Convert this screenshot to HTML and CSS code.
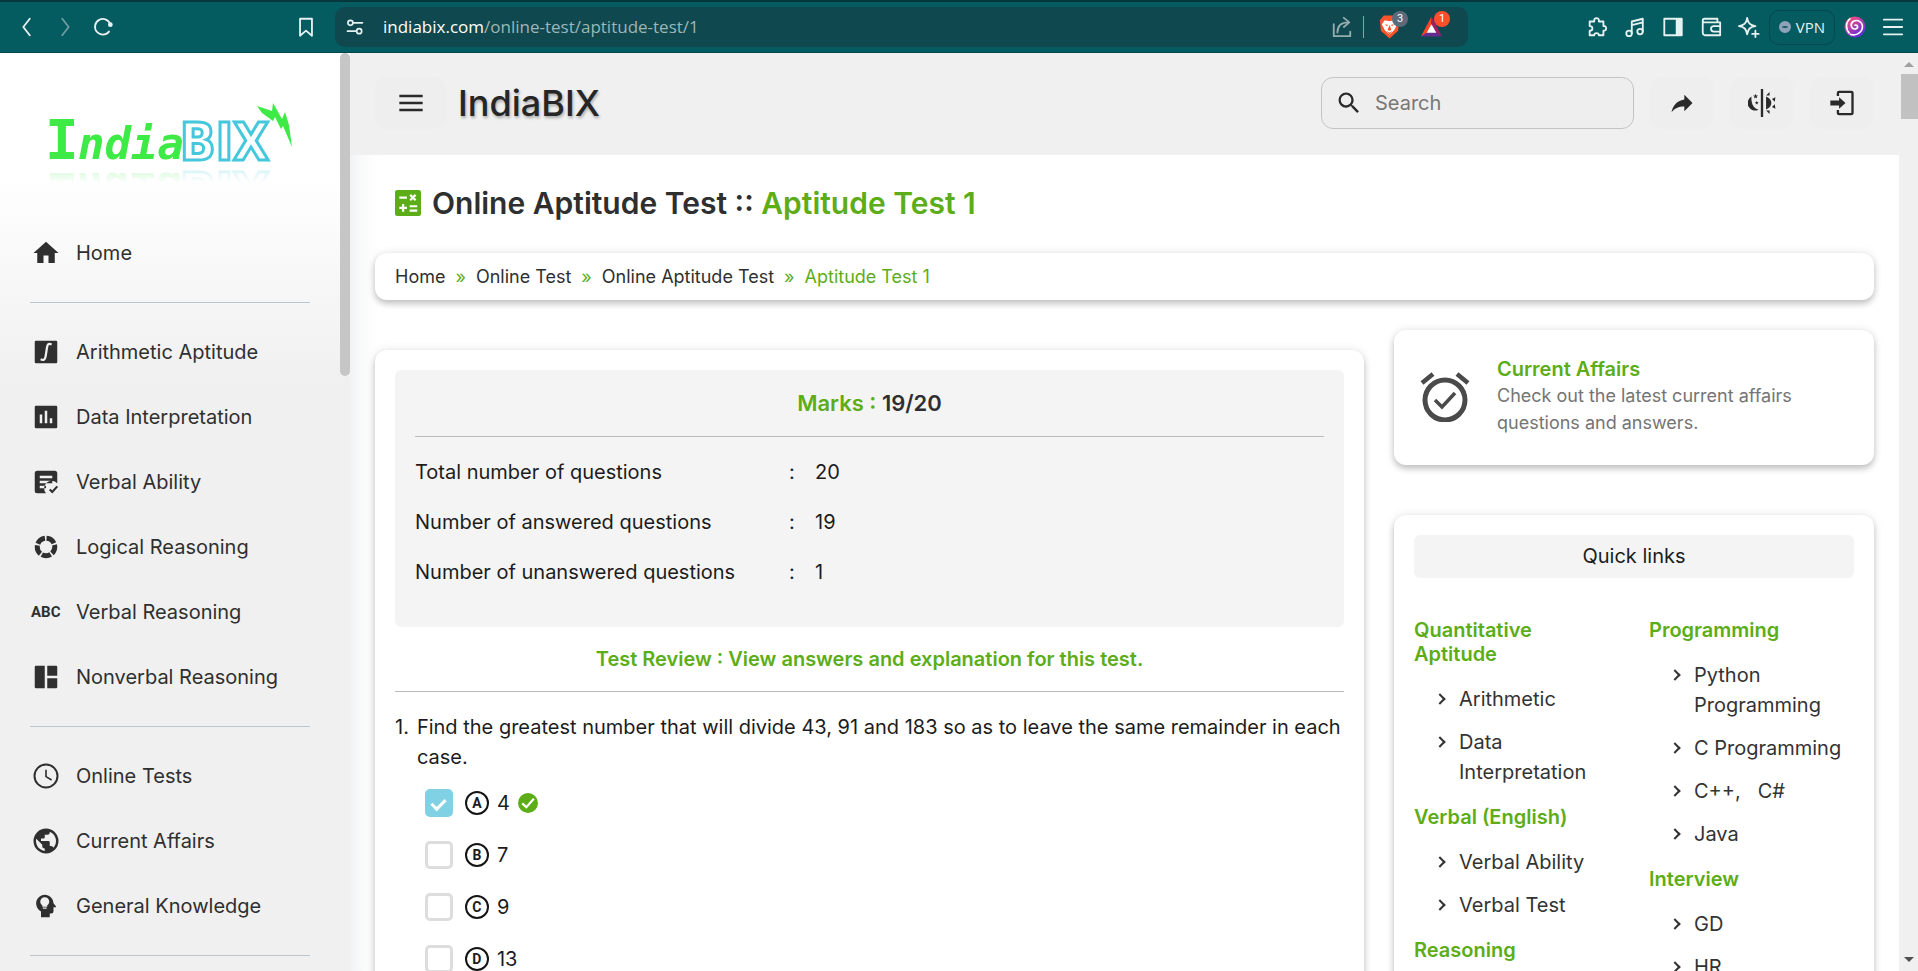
FILE: index.html
```html
<!DOCTYPE html>
<html lang="en">
<head>
<meta charset="utf-8">
<title>Online Aptitude Test - Aptitude Test 1 - IndiaBIX</title>
<link rel="stylesheet" href="styles.css">
</head>
<body>
<div class="toolbar">
  <div class="tools">
    <button class="tool" aria-label="Back"><svg viewBox="0 0 24 24" class="ic22"><path class="line" d="M15 3 8 12l7 9"/></svg></button>
    <button class="tool dim" aria-label="Forward"><svg viewBox="0 0 24 24" class="ic22"><path class="line" d="m9 3 7 9-7 9"/></svg></button>
    <button class="tool" aria-label="Reload"><svg viewBox="0 0 24 24" class="ic22"><path class="line" d="M18.500 17A8.500 8.500 0 1 1 20 9.500"/><circle cx="20" cy="9.500" r="2.600" fill="currentColor"/></svg></button>
  </div>
  <button class="tool bookmark" aria-label="Bookmark"><svg viewBox="0 0 24 24" class="ic22"><path class="line" d="M5.500 3h13v18.500L12 16l-6.500 5.500z"/></svg></button>
  <div class="address">
    <svg viewBox="0 0 24 24" class="ic20"><g class="line"><circle cx="6.500" cy="7" r="3"/><path d="M10 7h11M3 17h10"/><circle cx="17" cy="17" r="3"/></g></svg>
    <p class="url">indiabix.com<span>/online-test/aptitude-test/1</span></p>
    <svg viewBox="0 0 24 24" class="ic22 share"><path class="line" d="M3 9v13h18v-5M7 18c0-7 4-11 12-11M14 2l6 5-6 5"/></svg>
    <span class="bar"></span>
    <span class="ext">
      <svg viewBox="0 0 24 26" class="shield"><path d="M6 1h12l4 5-1 11-9 8-9-8L2 6z" fill="#fb542b"/><path d="m7 6 5 1 5-1 3 4-3 6-5 5-5-5-3-6z" fill="#fff"/><path d="m7 10 4 1-2 1zM17 10l-4 1 2 1zM12 11l2 5-2 1-2-1zM9 17l3 2 3-2-3 4z" fill="#fb542b"/></svg>
      <b class="badge grey">3</b>
    </span>
    <span class="ext">
      <svg viewBox="0 0 24 24" class="shield"><path d="M12 1 1 22l11-7z" fill="#ff4724"/><path d="m12 1 11 21-11-7z" fill="#9e1f63"/><path d="m1 22 11-7 11 7z" fill="#662d91"/><path d="m12 9 5 9H7z" fill="#fff"/></svg>
      <b class="badge red">1</b>
    </span>
  </div>
  <div class="tools">
    <button class="tool" aria-label="Extensions"><svg viewBox="0 0 24 24" class="ic22"><path class="line" d="M4 6h5c-1-5 6-5 5 0h5v5c4-1 4 6 0 5v5h-5c0-3-5-3-5 0H4v-5c4 0 4-5 0-5z"/></svg></button>
    <button class="tool" aria-label="Media"><svg viewBox="0 0 24 24" class="ic22"><g class="line"><circle cx="5.500" cy="19" r="3"/><circle cx="17.500" cy="17" r="3"/><path d="M8.500 19V6l12-3v14M8.500 10l12-3"/></g></svg></button>
    <button class="tool" aria-label="Sidebar"><svg viewBox="0 0 24 24" class="ic22"><path class="line" d="M2.500 3h19v18h-19z"/><path fill="currentColor" d="M15 3h7v18h-7z"/></svg></button>
    <button class="tool" aria-label="Wallet"><svg viewBox="0 0 24 24" class="ic22"><path class="line" d="M19 7V3H5a2 2 0 0 0 0 4h17v14H5a3 3 0 0 1-2-3V5M22 11h-7a3 3 0 0 0 0 6h7"/></svg></button>
    <button class="tool" aria-label="Assistant"><svg viewBox="0 0 24 24" class="ic22"><path class="line" d="M10 2c1 6 3 8 9 9-6 1-8 3-9 9-1-6-3-8-9-9 6-1 8-3 9-9zM19 16v7M15.500 19.500h7"/></svg></button>
    <button class="vpn"><span class="dot"></span>VPN</button>
    <button class="tool" aria-label="Profile"><svg viewBox="0 0 24 24" class="ic22"><defs><linearGradient id="sw" gradientUnits="userSpaceOnUse" x1="4" y1="2" x2="18" y2="22"><stop offset="0" stop-color="#ff4f7a"/><stop offset="1" stop-color="#5b2be0"/></linearGradient></defs><circle cx="12" cy="12" r="11.500" fill="url(#sw)"/><path d="M12 10c3-1 4 3 1 4-5 1-7-5-3-8 5-3 11 1 10 7-1 6-8 9-13 7" fill="none" stroke="#fff" stroke-width="1.800" stroke-linecap="round"/><path d="M7 2.500C1 7 2 15 6 19" fill="none" stroke="#fff" stroke-width="1.800"/></svg></button>
    <button class="tool" aria-label="Menu"><svg viewBox="0 0 24 24" class="ic22"><path class="line" d="M2 4h20M2 12h20M2 20h20"/></svg></button>
  </div>
</div>

<div class="page">
  <nav class="side">
    <a class="logo" href="#" aria-label="IndiaBIX">
      <svg viewBox="0 0 260 66" class="logo-art">
        <text class="lg-i" x="2" y="56">I</text><text class="lg-ndia" x="35" y="56">ndia</text>
        <text class="lg-bix" x="137" y="57">BIX</text>
        <path d="m214 3 15 5 1-8 9 16 3-7 4 13 3 22-9-21-2 3-6-12-2 4-11-8z" fill="#3eea45"/>
      </svg>
    </a>
    <ul class="menu">
      <li><a href="#"><svg viewBox="0 0 24 24"><path d="M10 20v-6h4v6h5v-8h3L12 3 2 12h3v8z"/></svg>Home</a></li>
    </ul>
    <ul class="menu">
      <li><a href="#"><svg viewBox="0 0 24 24"><rect x="3" y="3" width="18" height="18" rx="1"/><path d="M16.500 6c-3-1.300-3.400.500-3.800 3l-1 6.500c-.400 2.500-1.500 3.600-4 2.300" fill="none" stroke="#f0f0f0" stroke-width="1.800"/></svg>Arithmetic Aptitude</a></li>
      <li><a href="#"><svg viewBox="0 0 24 24"><rect x="3" y="3" width="18" height="18" rx="1"/><path fill="#f0f0f0" d="M7 10h2v7H7zM11 7h2v10h-2zM15 13h2v4h-2z"/></svg>Data Interpretation</a></li>
      <li><a href="#"><svg viewBox="0 0 24 24"><path fill-rule="evenodd" d="M5 3h14a2 2 0 0 1 2 2v8a6 6 0 0 0-9 8H5a2 2 0 0 1-2-2V5a2 2 0 0 1 2-2M7 7v2h10V7zM7 11v2h10v-2zM7 15v2h5v-2z"/><path d="m15 18 2 2 4-4.500" fill="none" stroke="#2f2f2f" stroke-width="1.700"/></svg>Verbal Ability</a></li>
      <li><a href="#"><svg viewBox="0 0 24 24"><circle cx="12" cy="12" r="7" fill="none" stroke="#2f2f2f" stroke-width="4" pathLength="100" stroke-dasharray="17 3" stroke-dashoffset="4"/></svg>Logical Reasoning</a></li>
      <li><a href="#"><span class="abc" aria-hidden="true">ABC</span>Verbal Reasoning</a></li>
      <li><a href="#"><svg viewBox="0 0 24 24"><path d="M4 3h7v18H4a1 1 0 0 1-1-1V4a1 1 0 0 1 1-1M13 3h7a1 1 0 0 1 1 1v7h-8zM13 13h8v7a1 1 0 0 1-1 1h-7z"/></svg>Nonverbal Reasoning</a></li>
    </ul>
    <ul class="menu">
      <li><a href="#"><svg viewBox="0 0 24 24"><circle cx="12" cy="12" r="9.200" fill="none" stroke="#2f2f2f" stroke-width="1.600"/><path d="M12 7v5.500l4.500 2.700" fill="none" stroke="#2f2f2f" stroke-width="1.300"/></svg>Online Tests</a></li>
      <li><a href="#"><svg viewBox="0 0 24 24"><path d="M17.900 17.390C17.640 16.590 16.890 16 16 16H15V13A1 1 0 0 0 14 12H8V10H10A1 1 0 0 0 11 9V7H13A2 2 0 0 0 15 5V4.590C17.930 5.770 20 8.640 20 12C20 14.080 19.200 15.970 17.900 17.390M11 19.930C7.050 19.440 4 16.080 4 12C4 11.380 4.080 10.780 4.210 10.210L9 15V16A2 2 0 0 0 11 18M12 2A10 10 0 0 0 2 12A10 10 0 0 0 12 22A10 10 0 0 0 22 12A10 10 0 0 0 12 2Z"/></svg>Current Affairs</a></li>
      <li><a href="#"><svg viewBox="0 0 24 24"><path d="M11 3c3.800 0 6.800 3 7 6.700l1.900 2.500c.300.300 0 .800-.400.800H18v3a2 2 0 0 1-2 2h-1v3H8v-4.700A7 7 0 0 1 11 3"/><path fill="#f0f0f0" d="M11 5a3.500 3.500 0 0 1 2 6.400v1.100H9v-1.100A3.500 3.500 0 0 1 11 5M9.500 13.200h3v1h-3z"/></svg>General Knowledge</a></li>
    </ul>
    <ul class="menu"></ul>
    <span class="side-thumb"></span>
  </nav>

  <div class="main">
    <header class="top">
      <button class="sq wide" aria-label="Toggle menu"><svg viewBox="0 0 24 24"><path d="M2 5h20v2H2zM2 11h20v2H2zM2 17h20v2H2z"/></svg></button>
      <span class="brand">IndiaBIX</span>
      <label class="search">
        <svg viewBox="0 0 24 24"><path d="M9.500 3A6.500 6.500 0 0 1 16 9.500C16 11.110 15.410 12.590 14.440 13.730L14.710 14H15.500L20.500 19L19 20.500L14 15.500V14.710L13.730 14.440C12.590 15.410 11.110 16 9.500 16A6.500 6.500 0 0 1 3 9.500A6.500 6.500 0 0 1 9.500 3M9.500 5C7 5 5 7 5 9.500C5 12 7 14 9.500 14C12 14 14 12 14 9.500C14 7 12 5 9.500 5Z"/></svg>
        <input type="text" placeholder="Search" aria-label="Search">
      </label>
      <button class="sq" aria-label="Share"><svg viewBox="0 0 24 24"><path d="M21 12 14 5V9C7 10 4 15 3 20C5.500 16.500 9 14.900 14 14.900V19Z"/></svg></button>
      <button class="sq" aria-label="Light or dark"><svg viewBox="0 0 24 24"><path d="M11 0h2v24h-2z"/><path d="M15.500 6.500c6 2 6 9 0 11z"/><path d="M3 6.500a6.200 6.200 0 0 0 6 11.200C4.500 16.500 2.500 12 3 6.500"/><path d="m6.500 4 .6 1.500 1.500.1-1.200 1 .4 1.500-1.300-.8-1.300.8.4-1.500-1.200-1 1.500-.1zM7.500 10l.4 1.200 1.300.1-1 .8.3 1.200-1-.700-1 .700.3-1.200-1-.8 1.300-.1zM18.500 2.500v3h-3zM23.500 7l-.5 4-2.500-2.500zM23.500 17l-3-1.500L23 13zM18.500 21.500v-3h-3z"/></svg></button>
      <button class="sq" aria-label="Login"><svg viewBox="0 0 24 24"><path d="M8.500 6V3.500a1 1 0 0 1 1-1h10.500a1 1 0 0 1 1 1v17a1 1 0 0 1-1 1H9.500a1 1 0 0 1-1-1V18" fill="none" stroke="#2a2a2a" stroke-width="2"/><path d="M2 9.800h7.500V7l5.500 5-5.500 5v-2.800H2z"/></svg></button>
    </header>

    <div class="content">
      <h1><svg viewBox="0 0 24 24"><rect x="0" y="0" width="24" height="24" rx="2" fill="#5cad18"/><path d="M4 7h7M14 4.500l5 5M19 4.500l-5 5M7.500 13v7M4 16.500h7M13.500 15h7M13.500 19h7" stroke="#fff" stroke-width="2" fill="none"/></svg><span>Online Aptitude Test :: <span class="green">Aptitude Test 1</span></span></h1>

      <nav class="crumbs" aria-label="Breadcrumb">
        <a href="#">Home</a><i>»</i><a href="#">Online Test</a><i>»</i><a href="#">Online Aptitude Test</a><i>»</i><span class="green">Aptitude Test 1</span>
      </nav>

      <div class="cols">
        <section class="card test">
          <div class="result">
            <h2><span class="green">Marks :</span> 19/20</h2>
            <table class="stats">
              <tr><th scope="row">Total number of questions</th><td>:</td><td>20</td></tr>
              <tr><th scope="row">Number of answered questions</th><td>:</td><td>19</td></tr>
              <tr><th scope="row">Number of unanswered questions</th><td>:</td><td>1</td></tr>
            </table>
          </div>
          <p class="review">Test Review : View answers and explanation for this test.</p>
          <div class="question">
            <span>1.</span>
            <div>
              <p>Find the greatest number that will divide 43, 91 and 183 so as to leave the same remainder in each case.</p>
              <ul class="options">
                <li><input type="checkbox" id="oa" checked><label for="oa"><b>A</b>4</label><svg viewBox="0 0 24 24"><circle cx="12" cy="12" r="12" fill="#5cad18"/><path d="m5 12.500 5 4.500 9-10" fill="none" stroke="#fff" stroke-width="2.600"/></svg></li>
                <li><input type="checkbox" id="ob"><label for="ob"><b>B</b>7</label></li>
                <li><input type="checkbox" id="oc"><label for="oc"><b>C</b>9</label></li>
                <li><input type="checkbox" id="od"><label for="od"><b>D</b>13</label></li>
              </ul>
            </div>
          </div>
        </section>

        <aside class="aside">
          <section class="card affairs">
            <svg viewBox="0 0 50 50"><g fill="none" stroke="#4a4a4a"><circle cx="25" cy="28" r="20" stroke-width="5"/><path d="m15 28 7 7 13-14" stroke-width="3.500"/><path d="M2 11 13 2M48 11 37 2" stroke-width="4.500"/></g></svg>
            <div><a class="green" href="#">Current Affairs</a><p>Check out the latest current affairs questions and answers.</p></div>
          </section>
          <section class="card quick">
            <h3>Quick links</h3>
            <div class="links">
              <div>
                <h4>Quantitative Aptitude</h4>
                <ul><li><a href="#">Arithmetic</a></li><li><a href="#">Data Interpretation</a></li></ul>
                <h4>Verbal (English)</h4>
                <ul><li><a href="#">Verbal Ability</a></li><li><a href="#">Verbal Test</a></li></ul>
                <h4>Reasoning</h4>
              </div>
              <div>
                <h4>Programming</h4>
                <ul><li><a href="#">Python Programming</a></li><li><a href="#">C Programming</a></li><li><span><a href="#">C++</a>, &nbsp; <a href="#">C#</a></span></li><li><a href="#">Java</a></li></ul>
                <h4>Interview</h4>
                <ul><li><a href="#">GD</a></li><li><a href="#">HR</a></li></ul>
              </div>
            </div>
          </section>
        </aside>
      </div>
    </div>
  </div>

  <div class="scroll"><span class="up"></span><span class="thumb"></span><span class="down"></span></div>
</div>
</body>
</html>
```
FILE: styles.css
```css
* { box-sizing: border-box; }

body {
  margin: 0;
  height: 100vh;
  overflow: hidden;
  display: flex;
  flex-direction: column;
  font: 20px/30px Inter, sans-serif;
  color: #1c1c1c;
  background: #fff;
}

h1, h2, h3, h4, p, ul { margin: 0; padding: 0; font-weight: 400; }
ul { list-style: none; }
a { color: inherit; text-decoration: none; }
button { border: 0; padding: 0; background: none; color: inherit; font: inherit; }
svg { flex: none; display: block; }
.green { color: #5cad18; }

/* Browser toolbar */
.toolbar {
  flex: none;
  height: 53px;
  display: flex;
  align-items: center;
  padding: 0 6px 0 8px;
  background: #045b60;
  border-top: 2px solid #04383d;
  border-bottom: 1px solid #02494e;
  color: #e6f1f1;
}
.tools { display: flex; align-items: center; }
.tool { width: 38px; height: 36px; display: grid; place-items: center; }
.tool.dim { color: #6d9da0; }
.bookmark { margin: 0 10px 0 165px; }
.ic22 { width: 22px; height: 22px; }
.ic20 { width: 20px; height: 20px; }
.line { fill: none; stroke: currentColor; stroke-width: 2; stroke-linecap: round; stroke-linejoin: round; }
.address {
  flex: 1;
  height: 40px;
  margin-right: 110px;
  padding: 0 22px 0 10px;
  display: flex;
  align-items: center;
  border-radius: 10px;
  background: #0f484e;
}
.url { flex: 1; padding-left: 18px; font: 17px/24px "Open Sans", sans-serif; color: #fff; }
.url span { color: #9db6b8; }
.share { color: #93adaf; }
.bar { width: 1px; height: 22px; margin: 0 12px 0 10px; background: #8aa5a7; }
.ext { position: relative; margin-left: 2px; width: 40px; }
.ext + .ext { width: 26px; }
.shield { width: 23px; height: 26px; }
.badge {
  position: absolute;
  left: 14px;
  top: -3px;
  width: 16px;
  height: 16px;
  border-radius: 8px;
  font: 11px/16px Roboto, sans-serif;
  text-align: center;
  color: #fff;
}
.grey { background: #5b6b7a; }
.red { background: #fb4f2b; }
.vpn {
  width: 66px;
  height: 35px;
  margin: 0 1px;
  display: flex;
  align-items: center;
  justify-content: center;
  gap: 5px;
  border: 1px solid #02494e;
  border-radius: 10px;
  font: 15px/20px "Open Sans", sans-serif;
}
.dot { width: 12px; height: 12px; border-radius: 6px; border: solid #8fa3b8; border-width: 5px 3px; background: #1a5a66; }

/* Page frame */
.page { flex: 1; min-height: 0; display: flex; }
.side {
  position: relative;
  z-index: 1;
  flex: none;
  width: 350px;
  padding: 0 40px 0 30px;
  overflow: hidden;
  background: linear-gradient(#fff 0, #fff 120px, #f0f0f0 330px);
}
.side-thumb {
  position: absolute;
  right: 0;
  top: 0;
  width: 10px;
  height: 323px;
  border-radius: 5px;
  background: #c6c6c6;
}
.logo { display: block; height: 167px; padding: 50px 0 0 13px; }
.logo-art {
  width: 260px;
  height: 66px;
  overflow: visible;
  -webkit-box-reflect: below -6px linear-gradient(transparent 70%, rgba(0, 0, 0, .3));
}
.lg-i { font: bold 56px "DejaVu Sans Mono", monospace; fill: #3eea45; }
.lg-ndia { font: italic bold 44px "DejaVu Sans Mono", monospace; fill: #3eea45; }
.lg-bix { font: bold 52px "DejaVu Sans", sans-serif; font-stretch: condensed; fill: #fff; stroke: #45c8dc; stroke-width: 3px; }
.menu { color: #2f2f2f; padding-bottom: 17px; }
.menu + .menu { border-top: 1px solid #b9c8cd; padding-top: 16px; }
.menu a { height: 65px; display: flex; align-items: center; gap: 15px; padding-left: 1px; }
.menu svg, .abc { width: 30px; height: 30px; fill: #2f2f2f; }
.abc { font: bold 15px/30px Roboto, sans-serif; }

.main {
  flex: 1;
  min-width: 0;
  box-shadow: inset 30px 0 30px -30px rgba(30, 50, 80, .12);
}
.top {
  height: 102px;
  padding: 24px 25px 26px;
  display: flex;
  gap: 16px;
  background: #f0f0f0;
}
.sq { width: 64px; height: 52px; display: grid; place-items: center; border-radius: 12px; background: #eee; }
.sq.wide { width: 71px; margin-right: -4px; }
.sq svg, .search svg { width: 28px; height: 28px; fill: #2a2a2a; }
.brand {
  margin-right: auto;
  font-weight: 500;
  font-size: 36px;
  line-height: 52px;
  color: #262626;
  text-shadow: 1px 2px 3px rgba(0, 0, 0, .3);
}
.search {
  width: 313px;
  display: flex;
  align-items: center;
  gap: 12px;
  padding: 0 12px 0 13px;
  border: 1px solid #c4c4c4;
  border-radius: 12px;
  background: #eee;
}
.search input { min-width: 0; flex: 1; border: 0; padding: 0; background: none; font: inherit; outline: 0; }
.search input::placeholder { color: #777; }

.content { padding: 26px 25px 0; }
h1 {
  display: flex;
  align-items: center;
  gap: 11px;
  padding-left: 20px;
  font-weight: 600;
  font-size: 30px;
  line-height: 44px;
  color: #2f2f2f;
}
h1 svg { width: 26px; height: 26px; }
.crumbs, .card {
  border-radius: 12px;
  background: #fff;
  box-shadow: 0 4px 6px rgba(0, 0, 0, .2), 0 0 10px rgba(0, 0, 0, .1);
}
.crumbs {
  margin-top: 28px;
  padding: 9px 20px 8px;
  display: flex;
  gap: 10px;
  font-size: 18px;
  color: #2f2f2f;
}
.crumbs i { font-style: normal; color: #5cad18; }
.cols {
  margin-top: 30px;
  display: grid;
  grid-template-columns: minmax(0, 1fr) 480px;
  gap: 30px;
}
.test { margin-top: 20px; padding: 20px; height: 100vh; }
.result { padding: 18px 20px 30px; border-radius: 6px; background: #f4f4f4; }
.result h2 {
  padding-bottom: 18px;
  border-bottom: 1px solid #bbb;
  font-weight: 600;
  font-size: 22px;
  text-align: center;
  color: #2f2f2f;
}
.stats { margin-top: 10px; border-spacing: 0; }
.stats th, .stats td { height: 50px; padding: 0; font-weight: 400; text-align: left; }
.stats th { width: 374px; }
.stats td { width: 26px; }
.review {
  padding: 17px 0;
  border-bottom: 1px solid #bbb;
  font-weight: 600;
  text-align: center;
  color: #5cad18;
}
.question { display: flex; gap: 8px; padding-top: 20px; }
.options li { height: 52px; display: flex; align-items: center; padding-left: 8px; }
.options { padding-top: 5px; }
.options input {
  appearance: none;
  width: 28px;
  height: 28px;
  margin: 0 12px 0 0;
  border: 3px solid #ddd;
  border-radius: 5px;
  display: grid;
  place-items: center;
}
.options input:checked { border-color: #7fd1e3; background: #7fd1e3; }
.options input:checked::after {
  content: "";
  width: 6px;
  height: 11px;
  border: solid #fff;
  border-width: 0 3px 3px 0;
  transform: rotate(45deg);
}
.options label { display: flex; align-items: center; gap: 8px; }
.options b {
  width: 24px;
  height: 24px;
  border: 2px solid #151515;
  border-radius: 12px;
  font: bold 14px/20px Roboto, sans-serif;
  text-align: center;
}
.options svg { width: 20px; height: 20px; margin-left: 8px; }

.aside { display: grid; gap: 50px; align-content: start; }
.affairs { display: flex; gap: 27px; padding: 25px 40px 27px 26px; height: 135px; }
.affairs svg { width: 50px; height: 50px; margin-top: 17px; }
.affairs a { display: block; font-weight: 600; line-height: 28px; }
.affairs p { font-size: 18px; line-height: 27px; color: #747474; }
.affairs p { margin-top: -1px; }
.quick { padding: 20px; height: 100vh; }
.quick h3 { padding: 6px 0 7px; border-radius: 6px; background: #f4f4f4; font-size: 20px; text-align: center; }
.links { padding-top: 40px; display: grid; grid-template-columns: 1fr 1fr; gap: 30px; color: #333; }
.links h4 { padding-bottom: 18px; font-weight: 600; font-size: 20px; line-height: 24px; color: #5cad18; }
.links li { position: relative; padding-bottom: 13px; margin-left: 45px; }
.links ul { padding-bottom: 5px; }
.links li::before {
  content: "";
  position: absolute;
  left: -23px;
  top: 11px;
  width: 6px;
  height: 6px;
  border: solid #333;
  border-width: 2px 2px 0 0;
  transform: rotate(45deg);
}

.scroll {
  flex: none;
  width: 19px;
  display: flex;
  flex-direction: column;
  align-items: flex-end;
  padding: 9px 0;
  background: #f0f0f0;
}
.thumb { width: 17px; height: 45px; margin-top: 7px; background: #c1c1c1; }
.up, .down { border: 5px solid transparent; margin-right: 4px; }
.up { border-top: 0; border-bottom-color: #a0a0a0; }
.down { margin-top: auto; border-bottom: 0; border-top-color: #505050; }
```
